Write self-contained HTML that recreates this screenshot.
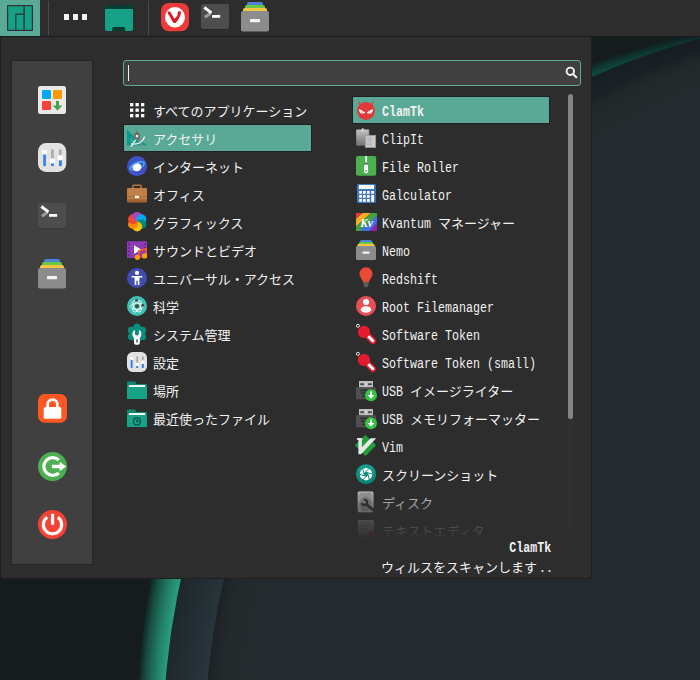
<!DOCTYPE html>
<html lang="ja"><head><meta charset="utf-8"><title>Menu</title>
<style>
html,body{margin:0;padding:0}
body{width:700px;height:680px;overflow:hidden;position:relative;background:#242b2e;font-family:"Liberation Mono",monospace;color:#f1f1f1}
.abs,.ic,.jp,.lt{position:absolute;display:block}
.ic,.jp{overflow:visible}
.jp text{font-family:"Liberation Sans","Noto Sans CJK JP",sans-serif;font-size:13px;fill:#f1f1f1}
#wall{left:0;top:0}
#panel{left:0;top:0;width:700px;height:36px;background:#2d2d2d;border-bottom:1px solid #1b1b1b}
#mbtn{left:0;top:0;width:40px;height:36px;background:#5aa997}
.sep{width:1px;top:1px;height:34px;background:#4b4b4b}
#menu{left:0;top:37px;width:590px;height:540.600px;background:#2d2d2d;border:1px solid #1e1f20;border-top:0;border-radius:0 0 3px 3px}
#fav{left:11px;top:60px;width:80px;height:503px;background:#404040;border:1px solid #242424}
#search{left:123px;top:60px;width:456px;height:24px;background:#404040;border:1px solid #5aa997;border-radius:3px}
#caret{left:128px;top:65px;width:1px;height:16px;background:#f0f0f0}
.sel{background:#5aa997;border:1px solid #202020;box-sizing:border-box}
#trough{left:568px;top:94px;width:5px;height:434px;background:#303030;border-radius:3px}
#thumb{left:568px;top:94px;width:5px;height:325px;background:#848484;border-radius:3px}
.lt{font-size:15.100px;line-height:18px;height:18px;white-space:pre;letter-spacing:0;transform:scaleX(.7726);transform-origin:left center;color:#f1f1f1}
.lt.b{font-weight:bold}
#fade{left:352px;top:486px;width:212px;height:51px;background:linear-gradient(to bottom,rgba(45,45,45,0) 0,rgba(45,45,45,.55) 45%,rgba(45,45,45,.8) 75%,rgba(45,45,45,.96) 100%)}
#clip{left:352px;top:94px;width:212px;height:442.500px;overflow:hidden}
</style></head><body>

<svg id="wall" class="abs" width="700" height="680" viewBox="0 0 700 680">
<defs>
<linearGradient id="gg" gradientUnits="userSpaceOnUse" x1="700" y1="30" x2="140" y2="680"><stop offset="0" stop-color="#126753"/><stop offset=".3" stop-color="#187c65"/><stop offset="1" stop-color="#2ca686"/></linearGradient>
<linearGradient id="bg2" gradientUnits="userSpaceOnUse" x1="700" y1="30" x2="140" y2="680"><stop offset="0" stop-color="#1c262c"/><stop offset=".35" stop-color="#222d33"/><stop offset="1" stop-color="#2b383f"/></linearGradient>
<radialGradient id="gd" gradientUnits="userSpaceOnUse" cx="830" cy="713" r="692"><stop offset=".958" stop-color="#0b1c1a" stop-opacity="0"/><stop offset=".975" stop-color="#0b1c1a" stop-opacity=".28"/><stop offset=".99" stop-color="#0c1a19" stop-opacity=".62"/><stop offset="1" stop-color="#10171a" stop-opacity=".92"/></radialGradient>
<radialGradient id="bd" gradientUnits="userSpaceOnUse" cx="886" cy="737" r="722.500"><stop offset=".935" stop-color="#0c1114" stop-opacity="0"/><stop offset="1" stop-color="#0c1114" stop-opacity=".42"/></radialGradient>
<radialGradient id="fd" gradientUnits="userSpaceOnUse" cx="938" cy="745" r="733"><stop offset=".95" stop-color="#0c1012" stop-opacity="0"/><stop offset=".978" stop-color="#0c1012" stop-opacity=".06"/><stop offset=".992" stop-color="#0c1012" stop-opacity=".2"/><stop offset="1" stop-color="#0c1012" stop-opacity=".36"/></radialGradient>
</defs>
<rect width="700" height="680" fill="#161b1e"/>
<circle cx="830" cy="713" r="692" fill="url(#gg)"/>
<circle cx="830" cy="713" r="692.500" fill="url(#gd)"/>
<circle cx="886" cy="737" r="722.500" fill="url(#bg2)"/>
<circle cx="886" cy="737" r="722.500" fill="url(#bd)"/>
<circle cx="938" cy="745" r="733" fill="#242b2e"/>
<circle cx="938" cy="745" r="733" fill="url(#fd)"/>
</svg>

<div id="panel" class="abs"></div><div id="mbtn" class="abs"></div>
<svg class="ic" style="left:7px;top:5px" width="26" height="26" viewBox="0 0 26 26" preserveAspectRatio="none" ><rect x="0" y="0" width="26" height="26" rx="1" fill="#2e3436"/>
<path d="M1.2 1.2H16.4V8.6H8.3V24.8H1.2Z" fill="#16a085"/>
<rect x="9.4" y="9.800" width="7" height="15" fill="#16a085"/>
<rect x="17.8" y="1.2" width="7" height="23.6" fill="#16a085"/></svg>
<div class="abs sep" style="left:48px"></div>
<div class="abs" style="left:64px;top:14px;width:5px;height:6px;background:#f2f2f2"></div>
<div class="abs" style="left:72.85px;top:14px;width:5px;height:6px;background:#f2f2f2"></div>
<div class="abs" style="left:81.7px;top:14px;width:5px;height:6px;background:#f2f2f2"></div>
<svg class="ic" style="left:105px;top:5px" width="28" height="26" viewBox="0 0 28 26" preserveAspectRatio="none" ><path d="M2 0H26a2 2 0 0 1 2 2V24a2 2 0 0 1-2 2H2a2 2 0 0 1-2-2V2a2 2 0 0 1 2-2Z" fill="#16a085"/>
<path d="M2 0H26a2 2 0 0 1 2 2V3.900H0V2a2 2 0 0 1 2-2Z" fill="#073c30"/>
<path d="M7.2 26V23.6a1.6 1.6 0 0 1 1.6-1.6H18.6a1.6 1.6 0 0 1 1.6 1.6V26Z" fill="#073c30"/></svg>
<div class="abs sep" style="left:148px"></div>
<svg class="ic" style="left:161px;top:3px" width="28" height="28" viewBox="0 0 28 28" preserveAspectRatio="none" ><rect x="0" y="0" width="28" height="28.300" rx="8" fill="#ee3a3a"/>
<ellipse cx="13.950" cy="14.300" rx="10" ry="10.200" fill="#fff"/>
<path d="M8.100 9.700L13.300 18.500" stroke="#d8222b" stroke-width="3" stroke-linecap="round"/>
<circle cx="18.400" cy="9.700" r="1.600" fill="#d8222b"/>
<path d="M20 9.900C19.600 13 17.200 17.200 15 19.500C14.300 20.200 12.900 20.100 12.300 19.200L10.400 15.400C12.600 16.600 16.300 15.200 16.800 9.800Z" fill="#d8222b"/>
<path d="M10.400 14.600C12.200 17.300 15.300 16.700 16.700 13.400L15 19.300L12.600 19.500Z" fill="#cf2028"/></svg>
<svg class="ic" style="left:201px;top:4px" width="28" height="25" viewBox="0 0 28 25" preserveAspectRatio="none" ><rect x="0" y=".6" width="28" height="25" rx="2" fill="#000" opacity=".25"/><rect x="0" y="0" width="28" height="25" rx="2" fill="#4d4d4d"/>
<path d="M9.600 9.300L3.900 13.300" stroke="#9c9c9c" stroke-width="2.900" fill="none"/>
<path d="M3.300 3.500L10.400 8.800" stroke="#fff" stroke-width="2.900" fill="none"/>
<rect x="11" y="11" width="8.200" height="2.800" rx=".4" fill="#fff"/></svg>
<svg class="ic" style="left:241px;top:2px" width="28" height="29.5" viewBox="0 0 28 29.5" preserveAspectRatio="none" ><path d="M8 0H20a2 2 0 0 1 2 2V6H6V2a2 2 0 0 1 2-2Z" fill="#4a86d8"/>
<path d="M6 3H22a2 2 0 0 1 2 2V9H4V5a2 2 0 0 1 2-2Z" fill="#6cc644"/>
<path d="M4 6H24a2 2 0 0 1 2 2V12H2V8a2 2 0 0 1 2-2Z" fill="#f6c544"/>
<rect x="0" y="9" width="28" height="20.500" rx="2" fill="#8c8c8c"/>
<rect x="9" y="17" width="10" height="3.200" rx=".6" fill="#f2f2f2"/></svg>
<div id="menu" class="abs"></div>
<div id="fav" class="abs"></div>
<svg class="ic" style="left:38px;top:86px" width="28" height="28" viewBox="0 0 28 28" preserveAspectRatio="none" ><rect x="0" y="0" width="28" height="28" rx="2.500" fill="#e9e9e9"/>
<rect x="4" y="4" width="9" height="9" rx="1.200" fill="#03a9f4"/>
<rect x="15" y="4" width="9" height="9" rx="1.200" fill="#ff9800"/>
<rect x="4" y="15" width="9" height="9" rx="1.200" fill="#f44336"/>
<path d="M18 15h3v4.500h3.400l-4.900 4.900-4.900-4.900H18Z" fill="#43a047"/></svg>
<svg class="ic" style="left:38px;top:143px" width="28.3" height="29" viewBox="0 0 28 28" preserveAspectRatio="none" ><rect x="0" y="0" width="28" height="28" rx="8" fill="#e2e2e2"/>
<rect x="5.200" y="6" width="2.600" height="16.500" rx="1.300" fill="#2f7bf0"/>
<rect x="13" y="6" width="2.600" height="16.500" rx="1.300" fill="#a9a9a9"/>
<rect x="13" y="17" width="2.600" height="5.500" rx="1.300" fill="#2f7bf0"/>
<rect x="20.800" y="6" width="2.600" height="16.500" rx="1.300" fill="#a9a9a9"/>
<rect x="20.800" y="14" width="2.600" height="8.500" rx="1.300" fill="#2f7bf0"/>
<circle cx="6.500" cy="8.600" r="2.600" fill="#fff"/>
<circle cx="14.300" cy="17.300" r="2.600" fill="#fff"/>
<circle cx="22.100" cy="14.200" r="2.600" fill="#fff"/></svg>
<svg class="ic" style="left:38px;top:203px" width="28" height="25" viewBox="0 0 28 25" preserveAspectRatio="none" ><rect x="0" y=".6" width="28" height="25" rx="2" fill="#000" opacity=".25"/><rect x="0" y="0" width="28" height="25" rx="2" fill="#4d4d4d"/>
<path d="M9.600 9.300L3.900 13.300" stroke="#9c9c9c" stroke-width="2.900" fill="none"/>
<path d="M3.300 3.500L10.400 8.800" stroke="#fff" stroke-width="2.900" fill="none"/>
<rect x="11" y="11" width="8.200" height="2.800" rx=".4" fill="#fff"/></svg>
<svg class="ic" style="left:38px;top:259px" width="28" height="29.5" viewBox="0 0 28 29.5" preserveAspectRatio="none" ><path d="M8 0H20a2 2 0 0 1 2 2V6H6V2a2 2 0 0 1 2-2Z" fill="#4a86d8"/>
<path d="M6 3H22a2 2 0 0 1 2 2V9H4V5a2 2 0 0 1 2-2Z" fill="#6cc644"/>
<path d="M4 6H24a2 2 0 0 1 2 2V12H2V8a2 2 0 0 1 2-2Z" fill="#f6c544"/>
<rect x="0" y="9" width="28" height="20.500" rx="2" fill="#8c8c8c"/>
<rect x="9" y="17" width="10" height="3.200" rx=".6" fill="#f2f2f2"/></svg>
<svg class="ic" style="left:38.1px;top:394px" width="29" height="28.7" viewBox="0 0 28 28" preserveAspectRatio="none" ><rect x="0" y="0" width="28" height="28" rx="6.500" fill="#ff5722"/>
<path d="M9.300 13V10.200a4.700 4.700 0 0 1 9.400 0V13" fill="none" stroke="#fff" stroke-width="2.600"/>
<rect x="5.500" y="12.600" width="17" height="11.600" rx="1.600" fill="#fff"/></svg>
<svg class="ic" style="left:38px;top:452px" width="29" height="29" viewBox="0 0 28 28" preserveAspectRatio="none" ><circle cx="14" cy="14" r="14" fill="#4caf50"/>
<path d="M20.100 7.700A8.600 8.600 0 1 0 20.100 20.300" fill="none" stroke="#fff" stroke-width="3.100" stroke-linecap="butt"/>
<path d="M13.400 12.400h7.500V9.400l6.200 4.600-6.200 4.600V15.600h-7.500Z" fill="#fff"/></svg>
<svg class="ic" style="left:38px;top:510.2px" width="29" height="29" viewBox="0 0 28 28" preserveAspectRatio="none" ><circle cx="14" cy="14" r="14" fill="#f44336"/>
<path d="M8.900 7A8.800 8.800 0 1 0 19.100 7" fill="none" stroke="#fff" stroke-width="3.100"/>
<rect x="12.450" y="3.500" width="3.100" height="10.700" rx=".8" fill="#fff"/></svg>
<div id="search" class="abs"></div><div id="caret" class="abs"></div>
<svg class="ic" style="left:564px;top:65px" width="16" height="16" viewBox="0 0 16 16"><circle cx="6.300" cy="6.300" r="3.700" fill="none" stroke="#f2f2f2" stroke-width="1.900"/><path d="M9.200 9.200L12.300 12.300" stroke="#f2f2f2" stroke-width="2" stroke-linecap="round"/></svg>
<div class="abs sel" style="left:123px;top:124px;width:189px;height:28px"></div>
<svg class="ic" style="left:127px;top:100px" width="20" height="20" viewBox="0 0 20 20" preserveAspectRatio="none" ><rect x="3" y="3" width="3.300" height="3.300" fill="#fff"/><rect x="3" y="8.5" width="3.300" height="3.300" fill="#fff"/><rect x="3" y="14" width="3.300" height="3.300" fill="#fff"/><rect x="8.5" y="3" width="3.300" height="3.300" fill="#fff"/><rect x="8.5" y="8.5" width="3.300" height="3.300" fill="#fff"/><rect x="8.5" y="14" width="3.300" height="3.300" fill="#fff"/><rect x="14" y="3" width="3.300" height="3.300" fill="#fff"/><rect x="14" y="8.5" width="3.300" height="3.300" fill="#fff"/><rect x="14" y="14" width="3.300" height="3.300" fill="#fff"/></svg>
<svg class="jp" style="left:152.6px;top:101px" width="158" height="20" viewBox="0 -15 158 20" role="img" aria-label="すべてのアプリケーション"><title>すべてのアプリケーション</title><text x="0" y="0" font-size="13" fill="#f1f1f1">すべてのアプリケーション</text></svg>
<svg class="ic" style="left:127px;top:128px" width="20" height="20" viewBox="0 0 20 20" preserveAspectRatio="none" ><path d="M0 1.400C5 7 12 12.500 19.600 16.600V17.200H0Z" fill="#0b9a8a"/>
<path d="M3.700 9.600L8 14H3.700Z" fill="#43a999"/>
<path d="M9 11.300L4.300 18.400" stroke="#ececec" stroke-width="1.400" stroke-linecap="round"/>
<path d="M11.200 11.300L15.400 18.400" stroke="#8f8f8f" stroke-width="1.300" stroke-linecap="round"/>
<path d="M4.600 16C10 16.600 15.500 14.500 17.400 9.200" stroke="#ececec" stroke-width="1.500" fill="none" stroke-linecap="round"/>
<rect x="7.100" y="4.900" width="5.700" height="6.800" rx=".7" fill="#6f6f6f"/>
<rect x="9.100" y="3.100" width="1.800" height="2.200" fill="#6f6f6f"/>
<rect x="8.900" y="7" width="2.200" height="2.200" fill="#f2f2f2"/></svg>
<svg class="jp" style="left:152.6px;top:129px" width="67" height="20" viewBox="0 -15 67 20" role="img" aria-label="アクセサリ"><title>アクセサリ</title><text x="0" y="0" font-size="13" fill="#f1f1f1">アクセサリ</text></svg>
<svg class="ic" style="left:127px;top:156px" width="20" height="20" viewBox="0 0 20 20" preserveAspectRatio="none" ><circle cx="10.050" cy="10.100" r="10.100" fill="#4250c6"/>
<g transform="rotate(-24 10.200 10)"><ellipse cx="10.200" cy="10" rx="7.400" ry="3.300" fill="none" stroke="#42a5f5" stroke-width="1.700"/></g>
<ellipse cx="9.900" cy="11.100" rx="4.450" ry="4.150" fill="#fff"/>
<g transform="rotate(-24 10.200 10)"><path d="M2.800 10A7.400 3.300 0 0 1 17.600 10" fill="none" stroke="#42a5f5" stroke-width="1.700" stroke-linecap="round"/></g></svg>
<svg class="jp" style="left:152.6px;top:157px" width="93" height="20" viewBox="0 -15 93 20" role="img" aria-label="インターネット"><title>インターネット</title><text x="0" y="0" font-size="13" fill="#f1f1f1">インターネット</text></svg>
<svg class="ic" style="left:127px;top:184px" width="20" height="20" viewBox="0 0 20 20" preserveAspectRatio="none" ><path d="M5.800 4.500V2.200a.9.900 0 0 1 .9-.9h6.600a.9.900 0 0 1 .9.900V4.500" fill="none" stroke="#b5743f" stroke-width="1.600"/>
<rect x="0" y="4" width="20" height="14.200" rx="1.200" fill="#c07e48"/>
<path d="M0 15.200H20V17a1.200 1.200 0 0 1-1.200 1.200H1.200A1.200 1.200 0 0 1 0 17Z" fill="#a3632f"/>
<rect x="0" y="12.300" width="20" height="1" fill="#a96a35"/>
<rect x="8" y="11.800" width="4" height="2.300" fill="#fff"/></svg>
<svg class="jp" style="left:152.6px;top:185px" width="54" height="20" viewBox="0 -15 54 20" role="img" aria-label="オフィス"><title>オフィス</title><text x="0" y="0" font-size="13" fill="#f1f1f1">オフィス</text></svg>
<svg class="ic" style="left:127px;top:212px" width="20" height="20" viewBox="0 0 20 20" preserveAspectRatio="none" ><defs><clipPath id="fo"><circle cx="5.96" cy="12.15" r="4.90"/></clipPath></defs><circle cx="5.96" cy="7.25" r="4.90" fill="#f44336"/><circle cx="10.20" cy="4.80" r="4.90" fill="#ab47bc"/><circle cx="14.44" cy="7.25" r="4.90" fill="#03a9f4"/><circle cx="14.44" cy="12.15" r="4.90" fill="#00897b"/><circle cx="10.20" cy="14.60" r="4.90" fill="#ffc107"/><circle cx="5.96" cy="12.15" r="4.90" fill="#fb8c00"/><circle cx="5.96" cy="7.25" r="4.90" fill="#f44336" clip-path="url(#fo)"/></svg>
<svg class="jp" style="left:152.6px;top:213px" width="93" height="20" viewBox="0 -15 93 20" role="img" aria-label="グラフィックス"><title>グラフィックス</title><text x="0" y="0" font-size="13" fill="#f1f1f1">グラフィックス</text></svg>
<svg class="ic" style="left:127px;top:240px" width="20" height="20" viewBox="0 0 20 20" preserveAspectRatio="none" ><rect x="0" y="1.200" width="20" height="16.800" rx=".8" fill="#8e3bb7"/>
<g fill="#6a2391"><rect x="1.200" y="3.400" width="1.700" height="1.900"/><rect x="1.200" y="7" width="1.700" height="1.900"/><rect x="1.200" y="10.600" width="1.700" height="1.900"/><rect x="1.200" y="14.200" width="1.700" height="1.900"/>
<rect x="17.100" y="3.400" width="1.700" height="1.900"/><rect x="17.100" y="7" width="1.700" height="1.900"/></g>
<path d="M7 5.200L14.300 9.600L7 14Z" fill="#fff"/>
<path d="M11.900 16.800V10.900L19.200 8.600v6.800" fill="none" stroke="#ff5a1f" stroke-width="1.600"/>
<circle cx="10.400" cy="17.300" r="2.600" fill="#ffa000"/>
<circle cx="17.600" cy="15.900" r="2.600" fill="#ffa000"/></svg>
<svg class="jp" style="left:152.6px;top:241px" width="106" height="20" viewBox="0 -15 106 20" role="img" aria-label="サウンドとビデオ"><title>サウンドとビデオ</title><text x="0" y="0" font-size="13" fill="#f1f1f1">サウンドとビデオ</text></svg>
<svg class="ic" style="left:127px;top:268px" width="20" height="20" viewBox="0 0 20 20" preserveAspectRatio="none" ><circle cx="10" cy="10" r="10" fill="#3f4db3"/>
<circle cx="10" cy="4.900" r="2.100" fill="#fff"/>
<path d="M4.600 7.900H15.400V9.500H12.400V17H10.700V12.800H9.300V17H7.600V9.500H4.600Z" fill="#fff"/></svg>
<svg class="jp" style="left:152.6px;top:269px" width="145" height="20" viewBox="0 -15 145 20" role="img" aria-label="ユニバーサル・アクセス"><title>ユニバーサル・アクセス</title><text x="0" y="0" font-size="13" fill="#f1f1f1">ユニバーサル・アクセス</text></svg>
<svg class="ic" style="left:127px;top:296px" width="20" height="20" viewBox="0 0 20 20" preserveAspectRatio="none" ><circle cx="10" cy="10" r="10" fill="#40c2b5"/>
<g fill="none" stroke="#fff" stroke-width=".85"><ellipse cx="10" cy="10.300" rx="6.300" ry="3.200" transform="rotate(60 10 10.300)"/><ellipse cx="10" cy="10.300" rx="6.300" ry="3.200" transform="rotate(-60 10 10.300)"/><ellipse cx="10" cy="10.300" rx="6.300" ry="3.200"/></g>
<circle cx="10" cy="10.300" r="2" fill="#4a4a4a"/>
<circle cx="9.500" cy="4.300" r="1.500" fill="#4a4a4a"/>
<circle cx="15.800" cy="9.300" r="1.500" fill="#4a4a4a"/></svg>
<svg class="jp" style="left:152.6px;top:297px" width="28" height="20" viewBox="0 -15 28 20" role="img" aria-label="科学"><title>科学</title><text x="0" y="0" font-size="13" fill="#f1f1f1">科学</text></svg>
<svg class="ic" style="left:127px;top:324px" width="20" height="20" viewBox="0 0 20 20" preserveAspectRatio="none" ><g fill="#0a8c7d"><circle cx="10" cy="9.500" r="8.100"/><circle cx="10.00" cy="2.80" r="3.300"/><circle cx="15.80" cy="6.15" r="3.300"/><circle cx="15.80" cy="12.85" r="3.300"/><circle cx="10.00" cy="16.20" r="3.300"/><circle cx="4.20" cy="12.850" r="3.300"/><circle cx="4.20" cy="6.15" r="3.300"/></g>
<path d="M7.900 5.700A5.100 5.100 0 0 0 7 13.900V19A1.800 1.800 0 0 0 8.800 20.800H11A1.800 1.800 0 0 0 12.800 19V13.900A5.100 5.100 0 0 0 11.900 5.700V9.400A2 2 0 0 1 7.900 9.400Z" fill="#fff"/>
<rect x="9" y="15.300" width="2" height="3.300" rx=".5" fill="#7a7a7a"/></svg>
<svg class="jp" style="left:152.6px;top:325px" width="80" height="20" viewBox="0 -15 80 20" role="img" aria-label="システム管理"><title>システム管理</title><text x="0" y="0" font-size="13" fill="#f1f1f1">システム管理</text></svg>
<svg class="ic" style="left:127px;top:352px" width="20" height="20" viewBox="0 0 28 28" preserveAspectRatio="none" ><rect x="0" y="0" width="28" height="28" rx="8" fill="#e2e2e2"/>
<rect x="5.200" y="6" width="2.600" height="16.500" rx="1.300" fill="#2f7bf0"/>
<rect x="13" y="6" width="2.600" height="16.500" rx="1.300" fill="#a9a9a9"/>
<rect x="13" y="17" width="2.600" height="5.500" rx="1.300" fill="#2f7bf0"/>
<rect x="20.800" y="6" width="2.600" height="16.500" rx="1.300" fill="#a9a9a9"/>
<rect x="20.800" y="14" width="2.600" height="8.500" rx="1.300" fill="#2f7bf0"/>
<circle cx="6.500" cy="8.600" r="2.600" fill="#fff"/>
<circle cx="14.300" cy="17.300" r="2.600" fill="#fff"/>
<circle cx="22.100" cy="14.200" r="2.600" fill="#fff"/></svg>
<svg class="jp" style="left:152.6px;top:353px" width="28" height="20" viewBox="0 -15 28 20" role="img" aria-label="設定"><title>設定</title><text x="0" y="0" font-size="13" fill="#f1f1f1">設定</text></svg>
<svg class="ic" style="left:127px;top:380px" width="20" height="20" viewBox="0 -1 20 20" preserveAspectRatio="none" ><path d="M0 1.400a1 1 0 0 1 1-1H8.200l1.200 2.600H20V17a1 1 0 0 1-1 1H1a1 1 0 0 1-1-1Z" fill="#0f8a71"/>
<rect x="1.800" y="3.900" width="16.400" height="2.400" rx=".3" fill="#f4f4f4"/>
<path d="M0 6.100H20V17a1 1 0 0 1-1 1H1a1 1 0 0 1-1-1Z" fill="#17a388"/></svg>
<svg class="jp" style="left:152.6px;top:381px" width="28" height="20" viewBox="0 -15 28 20" role="img" aria-label="場所"><title>場所</title><text x="0" y="0" font-size="13" fill="#f1f1f1">場所</text></svg>
<svg class="ic" style="left:127px;top:408px" width="20" height="20" viewBox="0 -1 20 20" preserveAspectRatio="none" ><path d="M0 1.400a1 1 0 0 1 1-1H8.200l1.200 2.600H20V17a1 1 0 0 1-1 1H1a1 1 0 0 1-1-1Z" fill="#0f8a71"/>
<rect x="1.800" y="3.900" width="16.400" height="2.400" rx=".3" fill="#f4f4f4"/>
<path d="M0 6.100H20V17a1 1 0 0 1-1 1H1a1 1 0 0 1-1-1Z" fill="#17a388"/><circle cx="10" cy="12.400" r="3.500" fill="none" stroke="#0a4d40" stroke-width="1.100"/><path d="M10 10.200V12.600H12.300" fill="none" stroke="#0a4d40" stroke-width="1.100"/></svg>
<svg class="jp" style="left:152.6px;top:409px" width="119" height="20" viewBox="0 -15 119 20" role="img" aria-label="最近使ったファイル"><title>最近使ったファイル</title><text x="0" y="0" font-size="13" fill="#f1f1f1">最近使ったファイル</text></svg>
<div class="abs sel" style="left:352px;top:96px;width:198px;height:28px"></div>
<div id="trough" class="abs"></div><div id="thumb" class="abs"></div>
<div id="clip" class="abs"><div class="abs" style="left:-352px;top:-94px;width:700px;height:680px">
<svg class="ic" style="left:356px;top:100px" width="20" height="20" viewBox="0 0 20 20" preserveAspectRatio="none" ><path d="M2.200 -.4C2.900 1.600 3.800 3 6 4.800L3.600 6.800C2.700 4 2.300 2 2.200 -.4Z" fill="#e0413f"/><path d="M17.700 -.4C17 1.600 16.100 3 13.900 4.800L16.300 6.800C17.200 4 17.600 2 17.700 -.4Z" fill="#e0413f"/>
<circle cx="9.950" cy="11" r="9" fill="#e23a3a"/>
<path d="M2.900 9.100C5 10 7.400 11.300 9.100 12.700C8.300 13.500 6.800 13.800 5.600 13.500C4 13.100 2.900 11.600 2.900 9.100Z" fill="#fff"/>
<path d="M17 9.100C14.900 10 12.500 11.300 10.800 12.700C11.600 13.500 13.100 13.800 14.300 13.500C15.900 13.100 17 11.600 17 9.100Z" fill="#fff"/>
<path d="M6.500 10.900V13" stroke="#8a979c" stroke-width=".7"/><path d="M13.400 10.900V13" stroke="#8a979c" stroke-width=".7"/></svg>
<span class="lt b" style="top:102.5px;left:381.6px;">ClamTk</span>
<svg class="ic" style="left:356px;top:128px" width="20" height="20" viewBox="0 0 20 20" preserveAspectRatio="none" ><defs><linearGradient id="cg" x1="0" y1="0" x2="0" y2="1"><stop offset="0" stop-color="#c2c2c2"/><stop offset="1" stop-color="#707070"/></linearGradient></defs>
<rect x="0" y="1.600" width="13.300" height="16.200" rx="1" fill="url(#cg)"/>
<rect x="0" y="1.600" width="1" height="16.200" fill="#000" opacity=".12"/><rect x="12.300" y="1.600" width="1" height="16.200" fill="#000" opacity=".12"/>
<rect x="4.600" y="1.800" width="4.200" height="1.600" rx=".7" fill="#d4d4d4"/>
<rect x="5.900" y="0" width="1.600" height="2.600" rx=".7" fill="#d4d4d4"/>
<rect x="9.300" y="7.300" width="10.400" height="12.300" fill="#cacaca" stroke="#9a9a9a" stroke-width=".7"/>
<g stroke="#aaa" stroke-width=".8"><path d="M10.800 9.600H16M10.800 11.300H16.500M10.800 13H16.500M10.800 15H15.500M10.800 16.700H15.800"/></g></svg>
<span class="lt" style="top:130.5px;left:381.6px;">ClipIt</span>
<svg class="ic" style="left:356px;top:156px" width="20" height="20" viewBox="0 0 20 20" preserveAspectRatio="none" ><rect x="0" y="0" width="20.200" height="19.700" rx="2" fill="#4caf50"/>
<path d="M9.300 .2l1.800 .75-1.800 .75 1.800 .75-1.800 .75 1.800 .75-1.800 .75 1.800 .75-1.800 .75 1.800 .75" stroke="#fff" stroke-width="1" fill="none"/>
<path d="M9.100 6.600h2l1 2.400H8.100Z" fill="#6d6d6d"/>
<rect x="8.100" y="8.400" width="4" height="8.800" rx="1.700" fill="#fff"/>
<rect x="9.300" y="14" width="1.600" height="1.700" rx=".4" fill="#4caf50"/>
<rect x="9.300" y="9.400" width="1.600" height="2" rx=".6" fill="#ddd"/></svg>
<span class="lt" style="top:158.5px;left:381.6px;">File Roller</span>
<svg class="ic" style="left:357px;top:184px" width="18.9" height="18.9" viewBox="0 0 18.9 18.9" preserveAspectRatio="none" ><rect x="0" y="0" width="18.900" height="18.900" rx="1.500" fill="#4478bf"/>
<rect x="1.900" y="1.100" width="15.100" height="4" rx=".5" fill="#fff"/>
<rect x="2.2" y="7.1" width="2.700" height="2.700" rx=".3" fill="#fff"/><rect x="2.2" y="11" width="2.700" height="2.700" rx=".3" fill="#fff"/><rect x="2.2" y="15.1" width="2.700" height="2.700" rx=".3" fill="#fff"/><rect x="6" y="7.1" width="2.700" height="2.700" rx=".3" fill="#fff"/><rect x="6" y="11" width="2.700" height="2.700" rx=".3" fill="#fff"/><rect x="6" y="15.1" width="2.700" height="2.700" rx=".3" fill="#fff"/><rect x="10" y="7.1" width="2.700" height="2.700" rx=".3" fill="#fff"/><rect x="10" y="11" width="2.700" height="2.700" rx=".3" fill="#fff"/><rect x="10" y="15.1" width="2.700" height="2.700" rx=".3" fill="#fff"/><rect x="14.300" y="7.100" width="2.700" height="2.700" rx=".3" fill="#fff"/><rect x="14.300" y="11" width="2.700" height="6.800" rx=".3" fill="#fff"/></svg>
<span class="lt" style="top:186.5px;left:381.6px;">Galculator</span>
<svg class="ic" style="left:356px;top:213px" width="21.3" height="18.1" viewBox="0 0 21.3 18.1" preserveAspectRatio="none" ><defs><clipPath id="kc"><rect x="0" y="0" width="21.300" height="18.100" rx=".6"/></clipPath></defs>
<g clip-path="url(#kc)"><rect width="21.300" height="18.100" fill="#8e24aa"/>
<path d="M0 0H6.900L0 6.100Z" fill="#e53935"/>
<path d="M6.900 0H14.700L0 13.500V6.100Z" fill="#ffb01a"/>
<path d="M14.700 0H21.300V2.800L4 18.100H0V13.500Z" fill="#43a047"/>
<path d="M21.300 2.800V9.800L13.500 18.100H4Z" fill="#3f6fe0"/>
<path d="M21.300 9.800V18.100H13.500Z" fill="#8e24aa"/></g>
<text x="4.200" y="14.400" font-family="Liberation Serif" font-style="italic" font-weight="bold" font-size="13" fill="#fff" textLength="12.600" lengthAdjust="spacingAndGlyphs">Kv</text></svg>
<span class="lt" style="top:214.5px;left:381.6px;">Kvantum</span><svg class="jp" style="left:437.6px;top:213px" width="80" height="20" viewBox="0 -15 80 20" role="img" aria-label="マネージャー"><title>マネージャー</title><text x="0" y="0" font-size="13" fill="#f1f1f1">マネージャー</text></svg>
<svg class="ic" style="left:356px;top:240px" width="20" height="20" viewBox="0 0 28 29.5" preserveAspectRatio="none" ><path d="M8 0H20a2 2 0 0 1 2 2V6H6V2a2 2 0 0 1 2-2Z" fill="#4a86d8"/>
<path d="M6 3H22a2 2 0 0 1 2 2V9H4V5a2 2 0 0 1 2-2Z" fill="#6cc644"/>
<path d="M4 6H24a2 2 0 0 1 2 2V12H2V8a2 2 0 0 1 2-2Z" fill="#f6c544"/>
<rect x="0" y="9" width="28" height="20.500" rx="2" fill="#8c8c8c"/>
<rect x="9" y="17" width="10" height="3.200" rx=".6" fill="#f2f2f2"/></svg>
<span class="lt" style="top:242.5px;left:381.6px;">Nemo</span>
<svg class="ic" style="left:355.5px;top:267.3px" width="20" height="20" viewBox="0 0 20 20" preserveAspectRatio="none" ><path d="M3.400 6.800A6.600 6.600 0 1 1 16.600 6.800C16.600 9.800 14 11.600 12.900 15H7.100C6 11.600 3.400 9.800 3.400 6.800Z" fill="#e84a36"/>
<path d="M7.100 15H12.900L12.200 19.600a.7.700 0 0 1-.7.600H8.500a.7.700 0 0 1-.7-.600Z" fill="#5c5c5c"/></svg>
<span class="lt" style="top:270.5px;left:381.6px;">Redshift</span>
<svg class="ic" style="left:356px;top:296px" width="20" height="20" viewBox="0 0 20 20" preserveAspectRatio="none" ><circle cx="10" cy="10" r="10" fill="#eb4f55"/>
<circle cx="10" cy="6" r="3.100" fill="#fff"/>
<ellipse cx="10" cy="13.500" rx="5.300" ry="3.200" fill="#fff"/></svg>
<span class="lt" style="top:298.5px;left:381.6px;">Root Filemanager</span>
<svg class="ic" style="left:356px;top:324px" width="20" height="20" viewBox="0 0 20 20" preserveAspectRatio="none" ><circle cx="1.900" cy="1.800" r="1.500" fill="none" stroke="#e6e6e6" stroke-width="1"/>
<path d="M10 10L16.900 16.900" stroke="#e41b2f" stroke-width="6.300" stroke-linecap="round"/>
<circle cx="7.900" cy="7.900" r="6.100" fill="#e41b2f"/>
<path d="M12.300 12.300L17 17" stroke="#fff" stroke-width="2.900" stroke-linecap="butt"/>
<circle cx="16.900" cy="16.900" r="1.400" fill="#fff"/></svg>
<span class="lt" style="top:326.5px;left:381.6px;">Software Token</span>
<svg class="ic" style="left:356px;top:352px" width="20" height="20" viewBox="0 0 20 20" preserveAspectRatio="none" ><circle cx="1.900" cy="1.800" r="1.500" fill="none" stroke="#e6e6e6" stroke-width="1"/>
<path d="M10 10L16.900 16.900" stroke="#e41b2f" stroke-width="6.300" stroke-linecap="round"/>
<circle cx="7.900" cy="7.900" r="6.100" fill="#e41b2f"/>
<path d="M12.300 12.300L17 17" stroke="#fff" stroke-width="2.900" stroke-linecap="butt"/>
<circle cx="16.900" cy="16.900" r="1.400" fill="#fff"/></svg>
<span class="lt" style="top:354.5px;left:381.6px;">Software Token (small)</span>
<svg class="ic" style="left:356px;top:381.2px" width="20" height="20" viewBox="0 0 20 20" preserveAspectRatio="none" ><rect x="3" y="0" width="14" height="6.600" fill="#bdbdbd"/>
<rect x="4.200" y="2.300" width="3.800" height="1.800" fill="#4a4a4a"/><rect x="12" y="2.300" width="3.800" height="1.800" fill="#4a4a4a"/><rect x="9" y="1.500" width="2" height="4" fill="#cfcfcf"/>
<rect x="0" y="6.200" width="20" height="12.100" rx=".8" fill="#505050"/>
<path d="M4 9.400H12M5 12.300H10M6 15.200H10" stroke="#303030" stroke-width="1.600"/>
<circle cx="15" cy="14.200" r="6" fill="#34c540"/>
<path d="M14 10.600h2v3.400h2.400L15 17.800 11.600 14H14Z" fill="#fff"/></svg>
<span class="lt" style="top:382.5px;left:381.6px;">USB</span><svg class="jp" style="left:409.6px;top:381px" width="106" height="20" viewBox="0 -15 106 20" role="img" aria-label="イメージライター"><title>イメージライター</title><text x="0" y="0" font-size="13" fill="#f1f1f1">イメージライター</text></svg>
<svg class="ic" style="left:356px;top:409.2px" width="20" height="20" viewBox="0 0 20 20" preserveAspectRatio="none" ><rect x="3" y="0" width="14" height="6.600" fill="#bdbdbd"/>
<rect x="4.200" y="2.300" width="3.800" height="1.800" fill="#4a4a4a"/><rect x="12" y="2.300" width="3.800" height="1.800" fill="#4a4a4a"/><rect x="9" y="1.500" width="2" height="4" fill="#cfcfcf"/>
<rect x="0" y="6.200" width="20" height="12.100" rx=".8" fill="#505050"/>
<path d="M4 9.400H12M5 12.300H10M6 15.200H10" stroke="#303030" stroke-width="1.600"/>
<circle cx="15" cy="14.200" r="6" fill="#34c540"/>
<path d="M14 10.600h2v3.400h2.400L15 17.800 11.600 14H14Z" fill="#fff"/></svg>
<span class="lt" style="top:410.5px;left:381.6px;">USB</span><svg class="jp" style="left:409.6px;top:409px" width="132" height="20" viewBox="0 -15 132 20" role="img" aria-label="メモリフォーマッター"><title>メモリフォーマッター</title><text x="0" y="0" font-size="13" fill="#f1f1f1">メモリフォーマッター</text></svg>
<svg class="ic" style="left:356px;top:436px" width="20" height="20" viewBox="0 0 20 20" preserveAspectRatio="none" ><path d="M9.400 -1.100L20.100 9.200L9.600 19.900L-1.100 9.200Z" fill="#1f9e38"/>
<path d="M1.100 1.900H6.400V4H5.900V11.300L14.500 2.200H20.200L5 18.200H2.400V4H1.100Z" fill="#e6e6e6"/>
</svg>
<span class="lt" style="top:438.5px;left:381.6px;">Vim</span>
<svg class="ic" style="left:356px;top:464px" width="20" height="20" viewBox="0 0 20 20" preserveAspectRatio="none" ><defs><linearGradient id="sg" x1="0" y1="0" x2="0" y2="1"><stop offset="0" stop-color="#16a394"/><stop offset="1" stop-color="#0b8072"/></linearGradient></defs><circle cx="10" cy="10.200" r="10.050" fill="url(#sg)"/><circle cx="10" cy="10.2" r="6.2" fill="#fff"/><path d="M11.48 8.72L13.43 15.96M12.03 10.74L6.73 16.05M10.54 12.23L3.30 10.29M8.52 11.68L6.57 4.44M7.97 9.66L13.27 4.35M9.46 8.17L16.70 10.11" stroke="#0d8a7b" stroke-width="1" fill="none"/><path d="M12.03 10.74L10.54 12.23L8.52 11.68L7.97 9.66L9.46 8.17L11.48 8.72Z" fill="#0d8a7b"/></svg>
<svg class="jp" style="left:381.6px;top:465px" width="119" height="20" viewBox="0 -15 119 20" role="img" aria-label="スクリーンショット"><title>スクリーンショット</title><text x="0" y="0" font-size="13" fill="#f1f1f1">スクリーンショット</text></svg>
<svg class="ic" style="left:356px;top:492px" width="20" height="20" viewBox="0 0 20 20" preserveAspectRatio="none" ><rect x="2" y="-.2" width="15.200" height="20.200" rx="1.200" fill="#b4b4b4" stroke="#d2d2d2" stroke-width=".7"/>
<ellipse cx="9.500" cy="11.800" rx="6" ry="7.600" fill="#959595"/>
<rect x="4.500" y="1" width="10" height="2.500" rx="1" fill="#a2a2a2"/>
<g fill="#e0e0e0"><circle cx="3.500" cy="1.300" r=".65"/><circle cx="15.700" cy="1.300" r=".65"/><circle cx="3.500" cy="7.400" r=".65"/><circle cx="15.700" cy="7.400" r=".65"/><circle cx="3.500" cy="18.500" r=".65"/></g>
<path d="M8.030 7.840A2.700 2.700 0 1 1 5.840 10.970" fill="none" stroke="#303030" stroke-width="2.200"/>
<path d="M10.300 12.300L17.800 18.300" stroke="#303030" stroke-width="2.900" stroke-linecap="round"/></svg>
<svg class="jp" style="left:381.6px;top:493px" width="54" height="20" viewBox="0 -15 54 20" role="img" aria-label="ディスク"><title>ディスク</title><text x="0" y="0" font-size="13" fill="#f1f1f1">ディスク</text></svg>
<svg class="ic" style="left:356px;top:520px" width="20" height="20" viewBox="0 0 20 20" preserveAspectRatio="none" ><rect x="2" y="0" width="16" height="20" rx=".8" fill="#a0a0a0"/>
<path d="M4.500 2.600H15.500M4.500 5.600H15.500M4.500 8.600H11.500" stroke="#707070" stroke-width="1"/>
<circle cx="15.500" cy="16.500" r="5.500" fill="#b32a20"/></svg>
<svg class="jp" style="left:381.6px;top:521px" width="106" height="20" viewBox="0 -15 106 20" role="img" aria-label="テキストエディタ"><title>テキストエディタ</title><text x="0" y="0" font-size="13" fill="#f1f1f1">テキストエディタ</text></svg>
</div></div>
<div id="fade" class="abs"></div>
<span class="lt b" style="top:538.7px;right:148.5px;transform-origin:right center;">ClamTk</span>
<svg class="jp" style="left:381.3px;top:557.3px" width="172" height="20" viewBox="0 -15 172 20" role="img" aria-label="ウィルスをスキャンします.."><title>ウィルスをスキャンします..</title><text x="0" y="0" font-size="13" fill="#f1f1f1">ウィルスをスキャンします<tspan x="157.500" font-family="Liberation Mono, monospace">.</tspan><tspan x="164.500" font-family="Liberation Mono, monospace">.</tspan></text></svg>
</body></html>
